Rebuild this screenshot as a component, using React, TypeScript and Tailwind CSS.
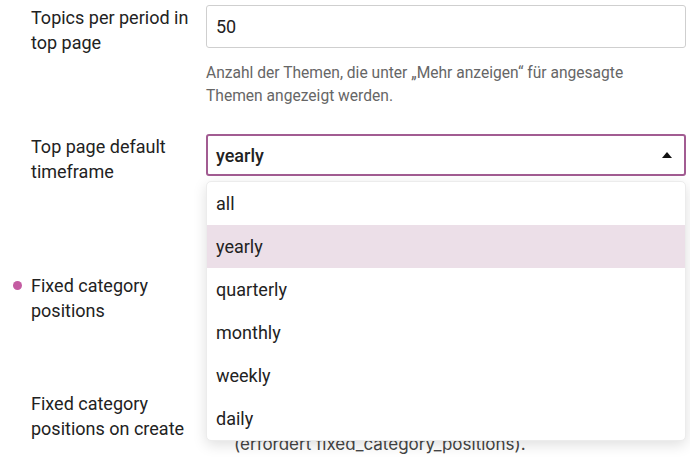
import { useState } from 'react';

const options = ['all', 'yearly', 'quarterly', 'monthly', 'weekly', 'daily'];

function Row({
  label,
  dot,
  className,
  children,
}: {
  label: string;
  dot?: boolean;
  className?: string;
  children?: React.ReactNode;
}) {
  return (
    <div className={`flex ${className ?? ''}`}>
      <div className="w-[31px] shrink-0 flex pt-[8px]">
        {dot && <span className="ml-[13px] w-[9px] h-[9px] rounded-full bg-[#c45ca2]" />}
      </div>
      <div className="w-[175px] shrink-0 pr-2 text-[18px] leading-[25px] text-[#222]">{label}</div>
      <div className="w-[480px] shrink-0 relative">{children}</div>
    </div>
  );
}

export default function App() {
  const [value, setValue] = useState('yearly');

  return (
    <div className="w-[690px] h-[468px] overflow-hidden bg-white font-['Roboto',sans-serif] text-[#222]">
      <Row label="Topics per period in top page" className="pt-[5px]">
        <div className="h-[43px] border border-[#cfcfcf] rounded-[3px] flex items-center px-[9px] text-[18px]">
          50
        </div>
        <p className="mt-[14px] pr-[40px] text-[15.6px] leading-[23px] text-[#666]">
          Anzahl der Themen, die unter „Mehr anzeigen“ für angesagte Themen angezeigt werden.
        </p>
      </Row>

      <Row label="Top page default timeframe" className="mt-[26px] relative z-10">
        <div className="h-[42px] border-2 border-[#a25c92] rounded-[3px] flex items-center justify-between pl-[8px] pr-[12px] text-[18px] font-medium">
          <span>{value}</span>
          <svg width="10" height="6" viewBox="0 0 10 6">
            <path d="M0 6 L5 0 L10 6 Z" fill="#111" />
          </svg>
        </div>
        <ul className="absolute left-0 right-0 top-[47px] bg-white border border-[#ececec] rounded-[5px] shadow-[0_4px_14px_rgba(0,0,0,0.13)] overflow-hidden">
          {options.map((o) => (
            <li
              key={o}
              onClick={() => setValue(o)}
              className={`h-[43px] flex items-center px-[9px] text-[18px] ${o === value ? 'bg-[#ecdfe8]' : ''}`}
            >
              {o}
            </li>
          ))}
        </ul>
      </Row>

      <Row label="Fixed category positions" dot className="mt-[89px]">
        <div className="h-[50px]" />
      </Row>

      <Row label="Fixed category positions on create" className="mt-[68px]">
        <p className="pt-[42px] pl-[28px] font-['Inter',sans-serif] text-[17px] leading-[23px] text-[#444]">
          (erfordert fixed_category_positions).
        </p>
      </Row>
    </div>
  );
}
